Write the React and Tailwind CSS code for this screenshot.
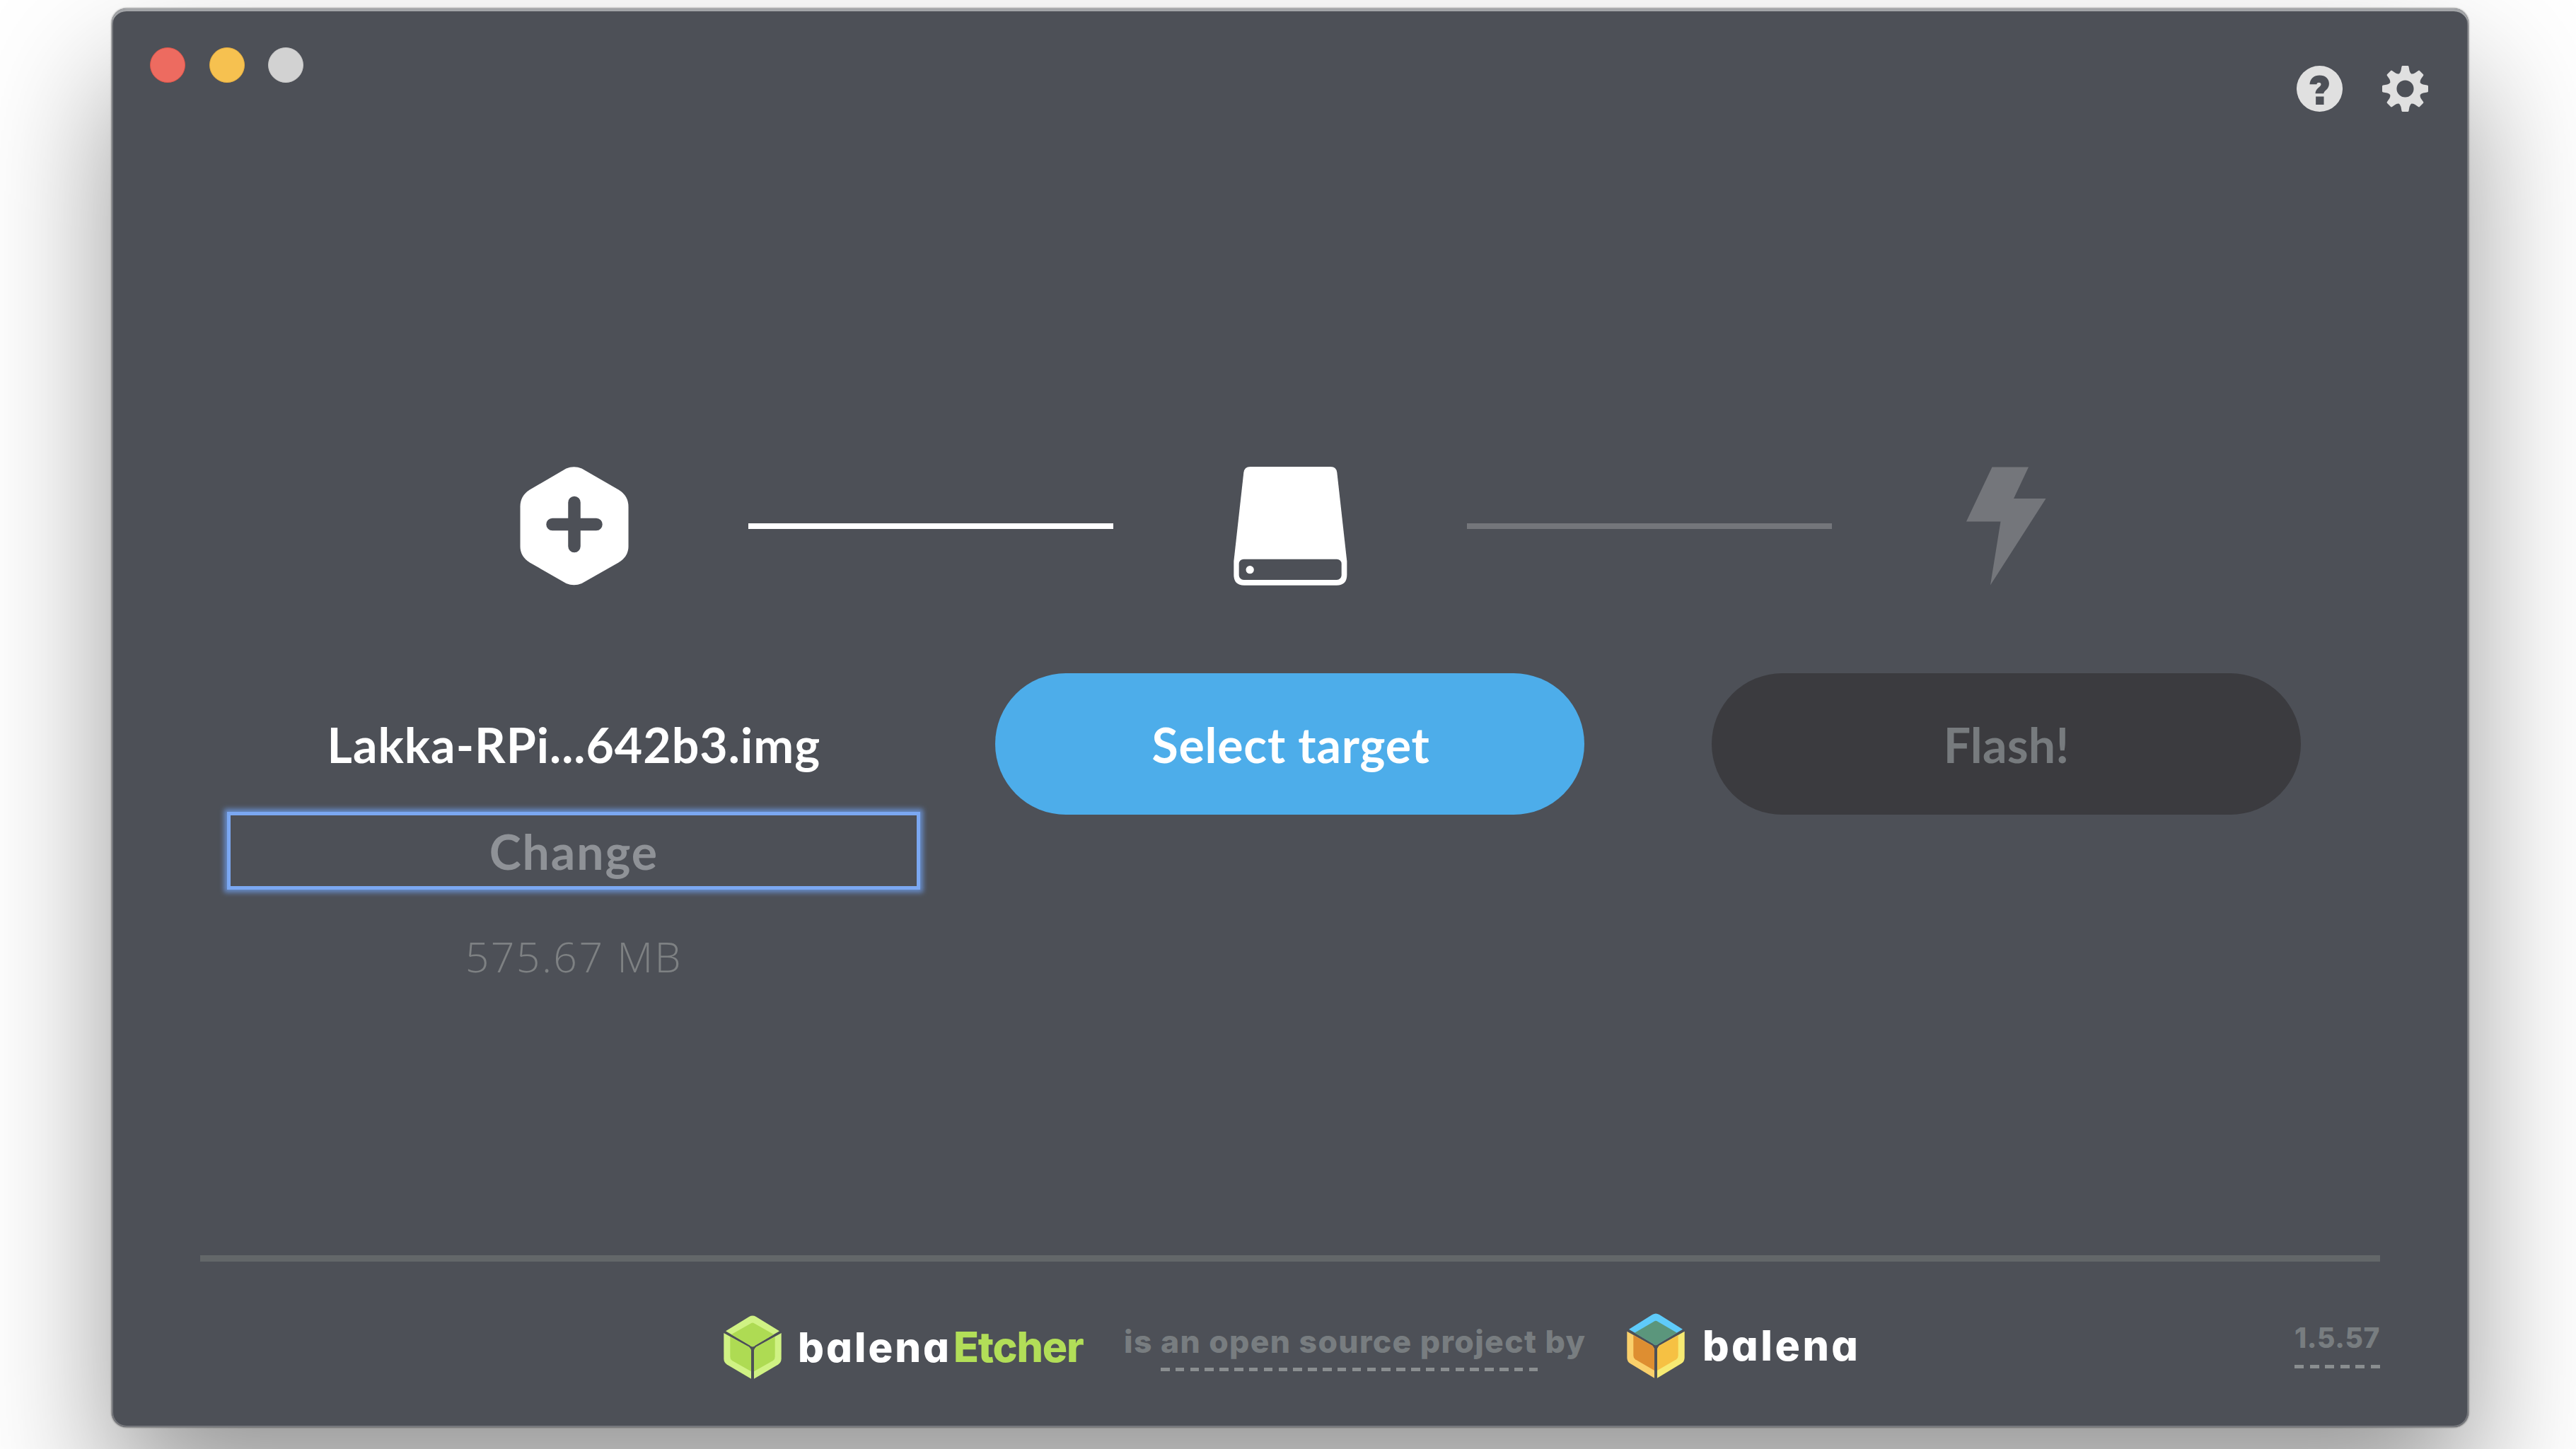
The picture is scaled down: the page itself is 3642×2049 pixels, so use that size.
import React from "react";

const TEETH = [0, 45, 90, 135, 180, 225, 270, 315];

function HelpIcon() {
  return (
    <svg viewBox="262 279 194 194" className="h-[65px] w-[65px]" aria-label="Help">
      <path
        fillRule="evenodd"
        fill="#e0e0e0"
        d="M359 279a97 97 0 1 0 0 194a97 97 0 1 0 0-194Z M317 357C319 332 336 319 359 319C383 319 399 333 399 354C399 379 378 382 376 396L341 396C342 373 365 368 365 357C365 348 347 348 347 357Z M343 409H377V443H343Z"
      />
    </svg>
  );
}

function GearIcon() {
  return (
    <svg viewBox="-97 -97 194 194" className="h-[65px] w-[65px]" aria-label="Settings">
      <circle r="51" fill="none" stroke="#e0e0e0" strokeWidth="30" />
      {TEETH.map((a) => (
        <path
          key={a}
          transform={`rotate(${a})`}
          fill="#e0e0e0"
          d="M-11 -97H11Q14 -97 15 -93L18 -76Q20 -68 27 -62L0 -50L-27 -62Q-20 -68 -18 -76L-15 -93Q-14 -97 -11 -97Z"
        />
      ))}
    </svg>
  );
}

function ImageIcon() {
  return (
    <svg viewBox="0 0 168 168" className="h-[168px] w-[168px] shrink-0">
      <path
        fill="#fff"
        d="M73.500 2.500Q84.500 -2 95.500 2.500L147.500 32.500Q161.500 41 161.500 56.500V112.500Q161.500 127 147.500 135.500L95.500 165Q84.500 169.500 73.500 165L22 135.500Q8.500 127 8.500 112.500V56.500Q8.500 41 22 32.500Z"
      />
      <path d="M85 50.500V112.500M54 81.500H116" stroke="#4d5057" strokeWidth="17.500" strokeLinecap="round" />
    </svg>
  );
}

function DriveIcon() {
  return (
    <svg viewBox="240 119 504 504" className="h-[168px] w-[168px] shrink-0">
      <path
        fill="#fff"
        d="M323 119H664Q688 119 691 144L733 520V578Q733 622 689 622H297Q253 622 253 578V520L295 144Q298 119 323 119Z"
      />
      <rect x="275" y="511" width="435" height="88" rx="20" fill="#4d5057" />
      <circle cx="321.500" cy="556" r="17" fill="#fff" />
    </svg>
  );
}

function BoltIcon() {
  return (
    <svg viewBox="0 0 168 168" className="h-[168px] w-[168px] shrink-0">
      <path fill="#74767b" d="M64.500 0.500H116L95 45H140.500L62 167.500L76.500 77.500H28Z" />
    </svg>
  );
}

function Cube({ className, top, left, right }) {
  return (
    <svg viewBox="90 110 246 276" preserveAspectRatio="none" className={className}>
      <path fill={top[0]} d="M99 178L198 116Q213 107 228 116L327 178L224 240Q213 252 202 240Z" />
      <path fill={top[1]} d="M123 193L205 145Q213 140 221 145L303 193L224 240Q213 252 202 240Z" />
      <path fill={left[0]} d="M91 187L195 246Q207 254 207 268V385L104 323Q91 314 91 298Z" />
      <path fill={left[1]} d="M118 203L195 246Q207 254 207 268V353L126 306Q118 301 118 290Z" />
      <path fill={right[0]} d="M335 187L231 246Q219 254 219 268V385L322 323Q335 314 335 298Z" />
      <path fill={right[1]} d="M308 203L231 246Q219 254 219 268V353L300 306Q308 301 308 290Z" />
    </svg>
  );
}

export default function App() {
  return (
    <div className="flex h-[2049px] w-[3642px] justify-start overflow-hidden bg-white pl-[158px] pt-[12px]">
      <div className="flex h-[2006px] w-[3332px] shrink-0 flex-col rounded-[21px] bg-[#4d5057] shadow-[inset_0_4px_0_#a3a5a8,inset_0_0_0_2px_#76787d,0_0_2px_1px_rgba(0,0,0,0.35),0_100px_190px_rgba(0,0,0,0.41)]">
        <div className="flex h-[180px] items-start justify-between pl-[54px] pr-[57px]">
          <div className="flex gap-[33.500px] pt-[55px]">
            <div className="h-[50px] w-[50px] rounded-full border border-[#e0554a] bg-[#ed6b60]" />
            <div className="h-[50px] w-[50px] rounded-full border border-[#e5ae3f] bg-[#f6c150]" />
            <div className="h-[50px] w-[50px] rounded-full border border-[#c6c6c6] bg-[#d2d2d2]" />
          </div>
          <div className="flex gap-[56px] pt-[81px]">
            <HelpIcon />
            <GearIcon />
          </div>
        </div>

        <div className="mt-[468px] flex items-center pl-[569px]">
          <ImageIcon />
          <div className="ml-[163px] mr-[166px] h-[8px] w-[516px] bg-white" />
          <DriveIcon />
          <div className="ml-[166px] mr-[162px] h-[8px] w-[516px] bg-[#74767b]" />
          <BoltIcon />
        </div>

        <div className="grid grid-cols-3 px-[147px] font-['Lato',sans-serif] text-[68px] font-bold leading-none">
          <div className="flex flex-col items-center pt-[191px]">
            <div className="tracking-[1px] text-white">Lakka-RPi...642b3.img</div>
            <button className="mt-[66px] flex h-[100px] w-[970px] items-center justify-center pt-[1px] font-bold tracking-[1.900px] text-[#8f9297] shadow-[0_0_0_5px_#7ba8f2,0_0_7px_9px_rgba(108,150,222,0.85)]">
              Change
            </button>
            <div className="mt-[70px] font-['Open_Sans',sans-serif] text-[59px] font-[350] tracking-[2.400px] text-[#7e8183]">
              575.67 MB
            </div>
          </div>
          <div className="flex justify-center pt-[124px]">
            <button className="flex h-[200px] w-[833px] items-center justify-center rounded-full bg-[#4dadea] pl-[2px] pt-[2px] font-bold tracking-[0.800px] text-white">
              Select target
            </button>
          </div>
          <div className="flex justify-center pt-[124px]">
            <button className="flex h-[200px] w-[833px] items-center justify-center rounded-full bg-[#3b3b3f] pt-[2px] font-bold tracking-[0.200px] text-[#777b7e]">
              Flash!
            </button>
          </div>
        </div>

        <div className="mx-[125px] mt-auto h-[243px] border-t-[9px] border-[#636769] pt-[73px] font-['Inter',sans-serif] font-extrabold leading-none">
          <div className="grid grid-cols-[1fr_auto_1fr] items-start">
            <div />
            <div className="flex items-start">
              <Cube
                className="mt-[3px] h-[90px] w-[82px] shrink-0"
                top={["#d0f284", "#aedb53"]}
                left={["#d0f284", "#aedb53"]}
                right={["#d0f284", "#aedb53"]}
              />
              <div className="ml-[23px] flex w-[461px] items-baseline pt-[18px] text-[58px] [font-feature-settings:'cv11']">
                <span className="tracking-[3px] text-white">balena</span>
                <span className="ml-[3px] text-[59px] font-extrabold tracking-[-1.200px] text-[#b2de58]">Etcher</span>
              </div>
              <div className="flex w-[711px] items-start whitespace-pre pt-[18px] text-[44.500px] tracking-[1.350px] text-[#787d80]">
                <span>is </span>
                <span className="flex flex-col">
                  <span>an open source project </span>
                  <span className="mt-[14px] h-[5px] w-[533px] bg-[repeating-linear-gradient(90deg,#8a8e90_0_12.500px,transparent_12.500px_20.830px)]" />
                </span>
                <span>by</span>
              </div>
              <Cube
                className="h-[92px] w-[82px] shrink-0"
                top={["#5fcbfa", "#5b967c"]}
                left={["#fad06b", "#de8e31"]}
                right={["#f6ea73", "#f6c143"]}
              />
              <div className="ml-[25px] w-[218px] whitespace-nowrap pt-[16px] text-[59px] tracking-[3.500px] text-white [font-feature-settings:'cv11']">
                balena
              </div>
            </div>
            <div className="flex flex-col items-end pt-[15px]">
              <div className="w-[121px] whitespace-nowrap text-[39px] tracking-[0.600px] text-[#787d80]">1.5.57</div>
              <div className="mt-[19px] h-[5px] w-[121px] bg-[repeating-linear-gradient(90deg,#8a8e90_0_13px,transparent_13px_21.600px)]" />
            </div>
          </div>
        </div>
      </div>
    </div>
  );
}
